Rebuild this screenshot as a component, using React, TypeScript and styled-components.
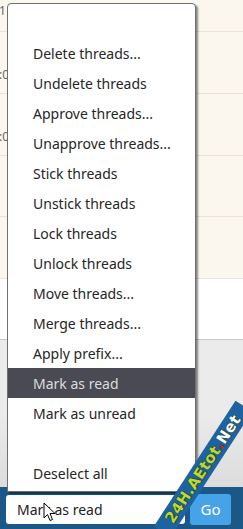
import React from "react";
import styled, { createGlobalStyle } from "styled-components";

const Global = createGlobalStyle`
  html, body { margin: 0; padding: 0; }
  body {
    width: 243px;
    height: 529px;
    overflow: hidden;
    font-family: "Noto Sans", "Open Sans", sans-serif;
    background: #ebebeb;
  }
  #root { height: 529px; }
`;

const Page = styled.div`
  position: relative;
  width: 243px;
  height: 529px;
  display: flex;
  flex-direction: column;
  overflow: hidden;
`;

const Rows = styled.div`
  flex: 1;
  display: flex;
  flex-direction: column;
  background: linear-gradient(to bottom, #ebebeb 85%, #dcdcdc 100%);
`;

const Row = styled.div<{ $h: number; $bg: string; $line: string }>`
  height: ${(p) => p.$h}px;
  box-sizing: border-box;
  background: ${(p) => p.$bg};
  border-bottom: 1px solid ${(p) => p.$line};
  display: flex;
  align-items: flex-end;
  padding-bottom: ${(p) => (p.$h > 40 ? 11 : 13)}px;
  font-size: 12px;
  color: #666;
  line-height: 14px;
`;

const Clip = styled.span`
  margin-left: -1px;
`;

const Bar = styled.div`
  height: 42px;
  background: #1c5887;
  display: flex;
  align-items: center;
  padding: 0 12px 0 6px;
  gap: 5px;
  box-sizing: border-box;
`;

const Select = styled.div`
  width: 179px;
  height: 29px;
  margin-top: 2px;
  background: #fff;
  border-radius: 3px;
  display: flex;
  align-items: center;
  padding-left: 11px;
  box-sizing: border-box;
  font-size: 14px;
  color: #222;
`;

const GoButton = styled.div`
  width: 41px;
  height: 31px;
  margin-top: 2px;
  background: #47a3e8;
  border-radius: 3px;
  display: flex;
  align-items: center;
  justify-content: center;
  color: #fff;
  font-size: 15px;
`;

const Menu = styled.div`
  position: absolute;
  left: 7px;
  top: 3px;
  width: 189px;
  box-sizing: border-box;
  background: #fff;
  border: 1px solid #6f6f6f;
  border-radius: 4px 4px 0 0;
  padding: 4px 0 3px;
  box-shadow: 2px 2px 2px rgba(0, 0, 0, 0.45);
  display: flex;
  flex-direction: column;
`;

const Item = styled.div<{ $active?: boolean }>`
  height: 30px;
  display: flex;
  align-items: center;
  padding-left: 25px;
  font-size: 14px;
  color: ${(p) => (p.$active ? "#dcdcdc" : "#262626")};
  background: ${(p) => (p.$active ? "#4a4a54" : "transparent")};
  white-space: nowrap;
`;

const Cursor = styled.svg`
  position: absolute;
  left: 43px;
  top: 502px;
`;

const Watermark = styled.div`
  position: absolute;
  left: 128px;
  top: 459px;
  width: 150px;
  height: 20px;
  transform: rotate(-57deg);
  transform-origin: center;
  display: flex;
  align-items: center;
  justify-content: center;
  background: #1f62a0;
  font-family: "DejaVu Sans", sans-serif;
  font-weight: bold;
  font-size: 15px;
  color: #bcd736;
  text-shadow: 0 0 1px #1a3d1a, 1px 1px 0 #234a20;
  letter-spacing: 0.3px;
`;

const Dot = styled.span`
  color: #e02020;
`;

const White = styled.span`
  color: #fff;
`;

const items = [
  "",
  "Delete threads...",
  "Undelete threads",
  "Approve threads...",
  "Unapprove threads...",
  "Stick threads",
  "Unstick threads",
  "Lock threads",
  "Unlock threads",
  "Move threads...",
  "Merge threads...",
  "Apply prefix...",
  "Mark as read",
  "Mark as unread",
  "",
  "Deselect all",
];

const rows = [
  { h: 32, bg: "#fcf7ee", line: "#e8e2d8", t: "1" },
  { h: 62, bg: "#fcf7ee", line: "#e8e2d8", t: ":0" },
  { h: 62, bg: "#fcf7ee", line: "#e8e2d8", t: ":0" },
  { h: 61, bg: "#fcf7ee", line: "#e8e2d8", t: "" },
  { h: 62, bg: "#fcf7ee", line: "#e5e5e5", t: "" },
  { h: 61, bg: "#ffffff", line: "#c9c9c9", t: "" },
];

export default function App() {
  return (
    <Page>
      <Global />
      <Rows>
        {rows.map((r, i) => (
          <Row key={i} $h={r.h} $bg={r.bg} $line={r.line}>
            <Clip>{r.t}</Clip>
          </Row>
        ))}
      </Rows>
      <Bar>
        <Select>Mark as read</Select>
        <GoButton>Go</GoButton>
      </Bar>
      <Menu>
        {items.map((it, i) => (
          <Item key={i} $active={it === "Mark as read"}>
            {it}
          </Item>
        ))}
      </Menu>
      <Cursor width="13" height="20" viewBox="0 0 13 20">
        <path d="M1 1 L1 16 L4.5 12.5 L7 18.5 L9.5 17.5 L7 11.5 L12 11.5 Z" fill="#fff" stroke="#000" strokeWidth="1" />
      </Cursor>
      <Watermark>
        24H.AEtot<Dot>.</Dot>
        <White>Net</White>
      </Watermark>
    </Page>
  );
}
